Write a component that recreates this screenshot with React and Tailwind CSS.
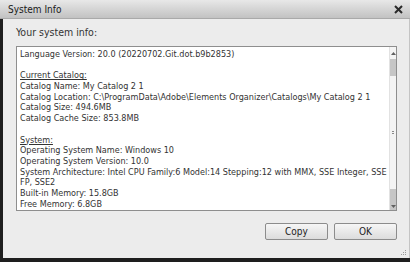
import React from 'react';

/** System Info dialog
 *
 * Classic Windows-style dialog that lists catalog and system details
 * in a scrolling read-only text box, with Copy / OK buttons underneath.
 */

const lines = [
  { text: 'Language Version: 20.0 (20220702.Git.dot.b9b2853)' },
  { text: '' },
  { text: 'Current Catalog:', underline: true },
  { text: 'Catalog Name: My Catalog 2 1' },
  { text: 'Catalog Location: C:\\ProgramData\\Adobe\\Elements Organizer\\Catalogs\\My Catalog 2 1' },
  { text: 'Catalog Size: 494.6MB' },
  { text: 'Catalog Cache Size: 853.8MB' },
  { text: '' },
  { text: 'System:', underline: true },
  { text: 'Operating System Name: Windows 10' },
  { text: 'Operating System Version: 10.0' },
  { text: 'System Architecture: Intel CPU Family:6 Model:14 Stepping:12 with MMX, SSE Integer, SSE' },
  { text: 'FP, SSE2' },
  { text: 'Built-in Memory: 15.8GB' },
  { text: 'Free Memory: 6.8GB' },
];

function Scrollbar() {
  return (
    <div className="w-[7px] h-full flex flex-col bg-[#f4f4f4] border-l border-[#e2e2e2]">
      {/* up arrow */}
      <div className="h-[12px] flex items-center justify-center">
        <svg width="5" height="3" viewBox="0 0 5 3"><path d="M0 3 L2.5 0 L5 3 Z" fill="#606060" /></svg>
      </div>
      <div className="h-[17px] bg-[#c6c6c6]"></div>
      <div className="flex-1 flex items-center justify-center">
        <div className="flex flex-col gap-[1px]">
          <div className="w-[2px] h-[1px] bg-[#8a8a8a]"></div>
          <div className="w-[2px] h-[1px] bg-[#8a8a8a]"></div>
        </div>
      </div>
      <div className="h-[16px] bg-[#c6c6c6]"></div>
      {/* down arrow */}
      <div className="h-[5px] flex items-start justify-center bg-[#c6c6c6]">
        <svg width="5" height="3" viewBox="0 0 5 3"><path d="M0 0 L2.5 3 L5 0 Z" fill="#606060" /></svg>
      </div>
    </div>
  );
}

function DialogButton({ label }) {
  return (
    <button className="h-[17px] w-[63px] border border-[#8c8c8c] rounded-[2px] bg-gradient-to-b from-[#f6f6f6] to-[#dcdcdc] text-[10px] leading-none text-[#222]">
      {label}
    </button>
  );
}

export default function App() {
  return (
    <div className="w-[410px] h-[262px] flex flex-col bg-[#1e1e1e] font-['DejaVu_Sans_Condensed','Liberation_Sans',sans-serif] overflow-hidden">
      {/* Title bar */}
      <div className="h-[19px] shrink-0 flex items-center justify-between pl-[8px] pr-[7px] bg-gradient-to-b from-[#e8e8e8] to-[#c2c2c2] border-b border-[#a9a9a9]">
        <span className="text-[10px] text-[#1a1a1a]">System Info</span>
        <svg width="9" height="9" viewBox="0 0 9 9">
          <path d="M1 1 L8 8 M8 1 L1 8" stroke="#2a2a2a" strokeWidth="2" />
        </svg>
      </div>

      <div className="flex flex-1 min-h-0">
        {/* dark left edge */}
        <div className="w-[3px] bg-[#1e1e1e]"></div>

        <div className="relative flex-1 flex flex-col bg-[#ececec] pl-[13px] pr-[12px] pt-[7px] border-r border-[#c4c4c4]">
          <div className="h-[13px] text-[10.5px] leading-[13px] text-[#333]">Your system info:</div>

          {/* Info text box */}
          <div className="mt-[7px] h-[165px] flex bg-white border border-[#8e8e8e]">
            <div className="flex-1 overflow-hidden pl-[3px] pt-[2px] text-[9px] leading-[10.7px] text-[#333]">
              {lines.map((line, index) => (
                <div key={index} className={`h-[10.7px] whitespace-nowrap ${line.underline ? 'underline' : ''}`}>
                  {line.text}
                </div>
              ))}
            </div>
            <Scrollbar />
          </div>

          {/* Buttons */}
          <div className="mt-[12px] flex justify-end gap-[6px]">
            <DialogButton label="Copy" />
            <DialogButton label="OK" />
          </div>

          {/* resize grip */}
          <svg className="absolute right-[2px] bottom-[2px]" width="6" height="6" viewBox="0 0 6 6">
            <rect x="4" y="0" width="1" height="1" fill="#9a9a9a" />
            <rect x="2" y="2" width="1" height="1" fill="#9a9a9a" />
            <rect x="4" y="2" width="1" height="1" fill="#9a9a9a" />
            <rect x="0" y="4" width="1" height="1" fill="#9a9a9a" />
            <rect x="2" y="4" width="1" height="1" fill="#9a9a9a" />
            <rect x="4" y="4" width="1" height="1" fill="#9a9a9a" />
          </svg>
        </div>
      </div>

      {/* dark bottom edge */}
      <div className="h-[4px] shrink-0 bg-[#1e1e1e]"></div>
    </div>
  );
}
